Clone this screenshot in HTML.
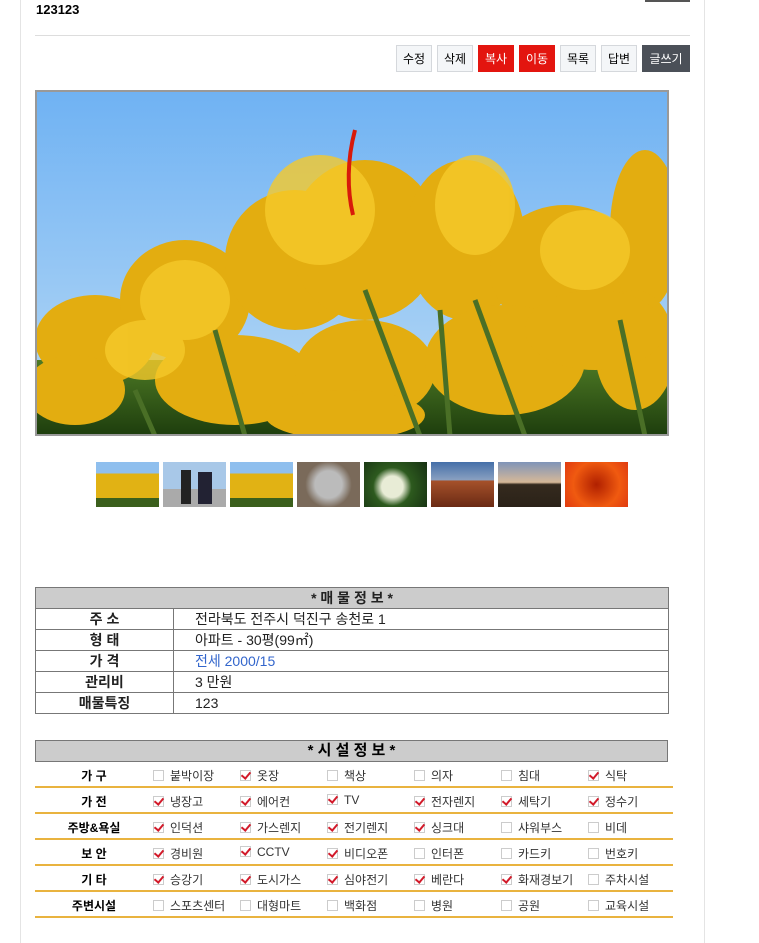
<!DOCTYPE html>
<html><head><meta charset="utf-8"><style>
body{margin:0;width:759px;height:943px;background:#fff;font-family:"Liberation Sans","Noto Sans CJK KR",sans-serif;position:relative;overflow:hidden}
.a{position:absolute}
.vl{position:absolute;top:0;width:1px;height:943px;background:#e4e4e4}
.btn{position:absolute;top:45px;height:27px;line-height:27px;font-size:12px;text-align:center;box-sizing:border-box;border:1px solid #d5d8dc;background:#f4f6f8;color:#000}
.red{background:#e3150f;border-color:#e3150f;color:#fff}
.dark{background:#4b5058;border-color:#4b5058;color:#fff}
table{border-collapse:collapse}
.info td{border:1px solid #777;height:20px;line-height:20px;padding:0;font-size:14px;color:#222}
.k{text-align:center;font-weight:bold}
.fac{position:absolute;left:35px;top:740px;width:638px}
.fh{height:20px;background:#ccc;border:1px solid #777;text-align:center;font-weight:bold;font-size:15px;line-height:20px;width:631px}
.fr{position:relative;height:24px;border-bottom:2px solid #e9b33f;font-size:12px;color:#333}
.fr .l{position:absolute;left:0;width:118px;text-align:center;font-weight:bold;top:5px;color:#000}
.c{position:absolute;top:5px;white-space:nowrap}
.c i{display:inline-block;width:9px;height:9px;border:1px solid #ccc;margin-right:6px;vertical-align:-1px;position:relative;background:#fff}
.c i.on::after{content:"";position:absolute;left:2px;top:-1px;width:4px;height:7px;border:solid #d21a2a;border-width:0 2px 2px 0;transform:rotate(40deg)}
.th{position:absolute;top:462px;width:63px;height:45px}
</style></head><body>
<div class="vl" style="left:20px"></div><div class="vl" style="left:704px"></div>
<div class="a" style="left:645px;top:0;width:45px;height:2px;background:#555"></div>
<div class="a" style="left:36px;top:2px;font-size:13px;font-weight:bold">123123</div>
<div class="a" style="left:35px;top:35px;width:655px;height:1px;background:#ddd"></div>
<div class="btn" style="left:396px;width:36px">수정</div>
<div class="btn" style="left:437px;width:36px">삭제</div>
<div class="btn red" style="left:478px;width:36px">복사</div>
<div class="btn red" style="left:519px;width:36px">이동</div>
<div class="btn" style="left:560px;width:36px">목록</div>
<div class="btn" style="left:601px;width:36px">답변</div>
<div class="btn dark" style="left:642px;width:48px">글쓰기</div>
<svg class="a" style="left:35px;top:90px" width="634" height="346" viewBox="0 0 634 346">
<defs><linearGradient id="s" x1="0" y1="0" x2="0" y2="1"><stop offset="0" stop-color="#6fb2f3"/><stop offset="1" stop-color="#b9daf5"/></linearGradient>
<linearGradient id="g" x1="0" y1="0" x2="0" y2="1"><stop offset="0" stop-color="#4e7a25"/><stop offset="1" stop-color="#1d3d0d"/></linearGradient></defs>
<rect width="634" height="346" fill="url(#s)"/>
<rect y="270" width="634" height="76" fill="url(#g)"/>
<g fill="#e3ad10">
<ellipse cx="60" cy="250" rx="60" ry="45"/><ellipse cx="150" cy="210" rx="65" ry="60"/><ellipse cx="260" cy="170" rx="70" ry="70"/><ellipse cx="330" cy="150" rx="75" ry="80"/>
<ellipse cx="430" cy="150" rx="60" ry="80"/><ellipse cx="530" cy="180" rx="75" ry="65"/><ellipse cx="610" cy="140" rx="35" ry="80"/>
<ellipse cx="200" cy="290" rx="80" ry="45"/><ellipse cx="330" cy="280" rx="70" ry="50"/><ellipse cx="470" cy="270" rx="80" ry="55"/>
<ellipse cx="600" cy="260" rx="40" ry="60"/><ellipse cx="310" cy="325" rx="80" ry="25"/><ellipse cx="40" cy="300" rx="50" ry="35"/><ellipse cx="560" cy="240" rx="70" ry="40"/>
</g>
<g fill="#f5c92a" opacity=".8"><ellipse cx="285" cy="120" rx="55" ry="55"/><ellipse cx="440" cy="115" rx="40" ry="50"/><ellipse cx="150" cy="210" rx="45" ry="40"/><ellipse cx="550" cy="160" rx="45" ry="40"/><ellipse cx="110" cy="260" rx="40" ry="30"/></g>
<g stroke="#4a6f26" stroke-width="5" fill="none"><path d="M330 200 L385 346"/><path d="M180 240 L210 346"/><path d="M405 220 L415 346"/><path d="M440 210 L490 346"/><path d="M585 230 L610 346"/><path d="M100 300 L120 346"/></g>
<path d="M320 40 C312 70 312 100 318 125" stroke="#d81a0a" stroke-width="4" fill="none"/>
<rect x="1" y="1" width="632" height="344" fill="none" stroke="#999" stroke-width="2"/>
</svg>
<div class="th" style="left:96px;background:linear-gradient(#8fbfee 0 25%,#e1b214 25% 80%,#3b5f1c 80%)"></div>
<div class="th" style="left:163px;background:linear-gradient(#a8c8e8 0 60%,#aaa 60%);"><div class="a" style="left:18px;top:8px;width:10px;height:34px;background:#222"></div><div class="a" style="left:35px;top:10px;width:14px;height:32px;background:#223"></div></div>
<div class="th" style="left:230px;background:linear-gradient(#8fbfee 0 25%,#e1b214 25% 80%,#3b5f1c 80%)"></div>
<div class="th" style="left:297px;background:radial-gradient(circle at 50% 50%,#bbb 0 35%,#7a6a5a 60%)"></div>
<div class="th" style="left:364px;background:radial-gradient(circle at 45% 55%,#e8ecd6 0 25%,#2d5a1e 45%,#163012)"></div>
<div class="th" style="left:431px;background:linear-gradient(#446fa8,#8aa0c0 40%,#a5512a 42%,#6a2a14)"></div>
<div class="th" style="left:498px;background:linear-gradient(#7f94b8,#d6b898 45%,#352a1e 50%,#2a2218)"></div>
<div class="th" style="left:565px;background:radial-gradient(circle,#b02000,#f05a10 60%,#e03a10)"></div>
<table class="info a" style="left:35px;top:587px;width:634px">
<tr><td colspan="2" style="background:#ccc;text-align:center;font-weight:bold">* 매 물 정 보 *</td></tr>
<tr><td class="k" style="width:137px">주 소</td><td style="padding-left:21px">전라북도 전주시 덕진구 송천로 1</td></tr>
<tr><td class="k">형 태</td><td style="padding-left:21px">아파트 - 30평(99㎡)</td></tr>
<tr><td class="k">가 격</td><td style="padding-left:21px;color:#3366cc">전세 2000/15</td></tr>
<tr><td class="k">관리비</td><td style="padding-left:21px">3 만원</td></tr>
<tr><td class="k">매물특징</td><td style="padding-left:21px">123</td></tr>
</table>
<div class="fac">
<div class="fh">* 시 설 정 보 *</div>
<div class="fr"><span class="l">가 구</span><span class="c" style="left:118px"><i></i>붙박이장</span><span class="c" style="left:205px"><i class="on"></i>옷장</span><span class="c" style="left:292px"><i></i>책상</span><span class="c" style="left:379px"><i></i>의자</span><span class="c" style="left:466px"><i></i>침대</span><span class="c" style="left:553px"><i class="on"></i>식탁</span></div>
<div class="fr"><span class="l">가 전</span><span class="c" style="left:118px"><i class="on"></i>냉장고</span><span class="c" style="left:205px"><i class="on"></i>에어컨</span><span class="c" style="left:292px"><i class="on"></i>TV</span><span class="c" style="left:379px"><i class="on"></i>전자렌지</span><span class="c" style="left:466px"><i class="on"></i>세탁기</span><span class="c" style="left:553px"><i class="on"></i>정수기</span></div>
<div class="fr"><span class="l">주방&amp;욕실</span><span class="c" style="left:118px"><i class="on"></i>인덕션</span><span class="c" style="left:205px"><i class="on"></i>가스렌지</span><span class="c" style="left:292px"><i class="on"></i>전기렌지</span><span class="c" style="left:379px"><i class="on"></i>싱크대</span><span class="c" style="left:466px"><i></i>샤워부스</span><span class="c" style="left:553px"><i></i>비데</span></div>
<div class="fr"><span class="l">보 안</span><span class="c" style="left:118px"><i class="on"></i>경비원</span><span class="c" style="left:205px"><i class="on"></i>CCTV</span><span class="c" style="left:292px"><i class="on"></i>비디오폰</span><span class="c" style="left:379px"><i></i>인터폰</span><span class="c" style="left:466px"><i></i>카드키</span><span class="c" style="left:553px"><i></i>번호키</span></div>
<div class="fr"><span class="l">기 타</span><span class="c" style="left:118px"><i class="on"></i>승강기</span><span class="c" style="left:205px"><i class="on"></i>도시가스</span><span class="c" style="left:292px"><i class="on"></i>심야전기</span><span class="c" style="left:379px"><i class="on"></i>베란다</span><span class="c" style="left:466px"><i class="on"></i>화재경보기</span><span class="c" style="left:553px"><i></i>주차시설</span></div>
<div class="fr"><span class="l">주변시설</span><span class="c" style="left:118px"><i></i>스포츠센터</span><span class="c" style="left:205px"><i></i>대형마트</span><span class="c" style="left:292px"><i></i>백화점</span><span class="c" style="left:379px"><i></i>병원</span><span class="c" style="left:466px"><i></i>공원</span><span class="c" style="left:553px"><i></i>교육시설</span></div>
</div>
</body></html>
